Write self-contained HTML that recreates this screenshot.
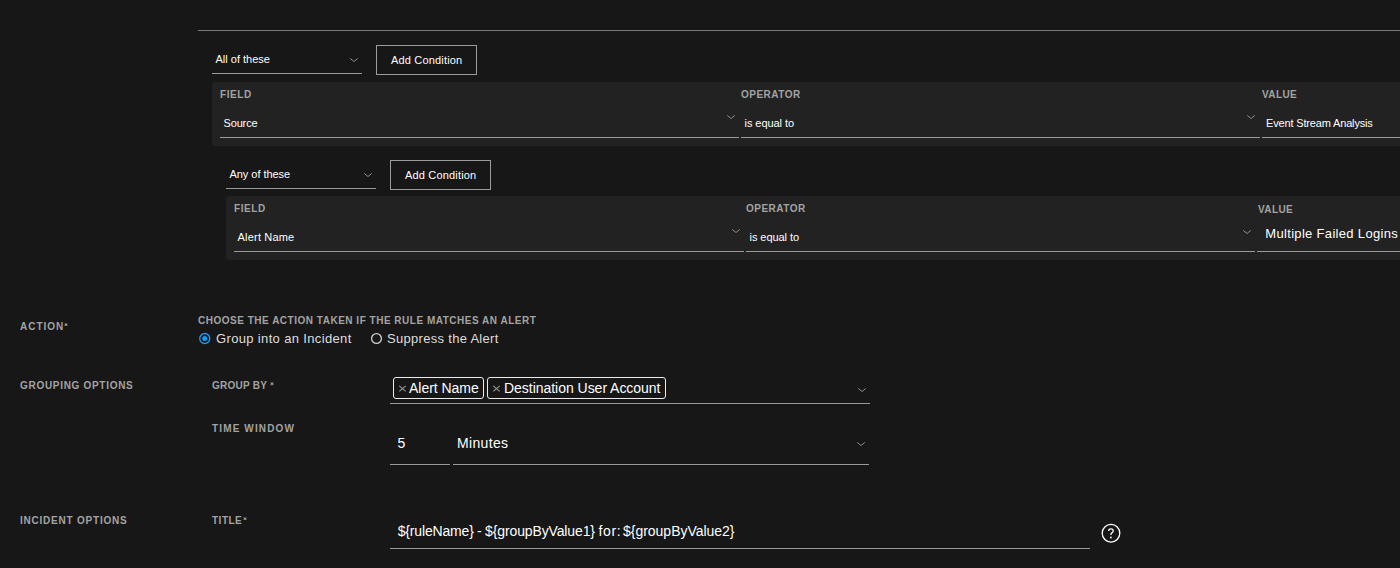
<!DOCTYPE html>
<html><head><meta charset="utf-8"><style>
html,body{margin:0;padding:0;}
body{width:1400px;height:568px;overflow:hidden;background:#171717;position:relative;font-family:"Liberation Sans",sans-serif;}
body>div,body>svg{position:absolute;box-sizing:content-box;}
.t{line-height:1;white-space:nowrap;}
</style></head><body>
<div style="left:212px;top:82px;width:1300px;height:64px;background:#222222;border-radius:4px;"></div>
<div style="left:226px;top:196px;width:1300px;height:64px;background:#222222;border-radius:4px;"></div>
<div style="left:198px;top:30px;width:1202px;height:1px;background:#787878;"></div>
<div style="left:212px;top:73px;width:150px;height:1px;background:#9a9a9a;"></div>
<div style="left:226px;top:188px;width:150px;height:1px;background:#9a9a9a;"></div>
<div style="left:220px;top:137px;width:519px;height:1px;background:#9a9a9a;"></div>
<div style="left:741px;top:137px;width:519px;height:1px;background:#9a9a9a;"></div>
<div style="left:1262px;top:137px;width:200px;height:1px;background:#9a9a9a;"></div>
<div style="left:234px;top:251px;width:510px;height:1px;background:#9a9a9a;"></div>
<div style="left:746px;top:251px;width:509px;height:1px;background:#9a9a9a;"></div>
<div style="left:1257px;top:251px;width:200px;height:1px;background:#9a9a9a;"></div>
<div style="left:390px;top:403px;width:480px;height:1px;background:#9a9a9a;"></div>
<div style="left:390px;top:464px;width:60px;height:1px;background:#9a9a9a;"></div>
<div style="left:453px;top:464px;width:416px;height:1px;background:#9a9a9a;"></div>
<div style="left:390px;top:548px;width:700px;height:1px;background:#9a9a9a;"></div>
<div style="left:376px;top:45px;width:99px;height:28px;border:1px solid #9b9b9b;border-radius:0px;"></div>
<div style="left:390px;top:160px;width:99px;height:28px;border:1px solid #9b9b9b;border-radius:0px;"></div>
<div style="left:393px;top:377px;width:89px;height:20px;border:1px solid #ebebeb;border-radius:3px;"></div>
<div style="left:487px;top:377px;width:177px;height:20px;border:1px solid #ebebeb;border-radius:3px;"></div>
<svg style="left:348.9px;top:57px" width="10" height="7" viewBox="0 0 10 7"><path d="M1.2 1.4 L5 4.5 L8.8 1.4" fill="none" stroke="#8c8c8c" stroke-width="1"/></svg>
<svg style="left:362.9px;top:172px" width="10" height="7" viewBox="0 0 10 7"><path d="M1.2 1.4 L5 4.5 L8.8 1.4" fill="none" stroke="#8c8c8c" stroke-width="1"/></svg>
<svg style="left:725.9px;top:114px" width="10" height="7" viewBox="0 0 10 7"><path d="M1.2 1.4 L5 4.5 L8.8 1.4" fill="none" stroke="#8c8c8c" stroke-width="1"/></svg>
<svg style="left:1246.4px;top:114px" width="10" height="7" viewBox="0 0 10 7"><path d="M1.2 1.4 L5 4.5 L8.8 1.4" fill="none" stroke="#8c8c8c" stroke-width="1"/></svg>
<svg style="left:730.9px;top:228px" width="10" height="7" viewBox="0 0 10 7"><path d="M1.2 1.4 L5 4.5 L8.8 1.4" fill="none" stroke="#8c8c8c" stroke-width="1"/></svg>
<svg style="left:1242.4px;top:228.5px" width="10" height="7" viewBox="0 0 10 7"><path d="M1.2 1.4 L5 4.5 L8.8 1.4" fill="none" stroke="#8c8c8c" stroke-width="1"/></svg>
<svg style="left:856.9px;top:387px" width="10" height="7" viewBox="0 0 10 7"><path d="M1.2 1.4 L5 4.5 L8.8 1.4" fill="none" stroke="#8c8c8c" stroke-width="1"/></svg>
<svg style="left:855.9px;top:441px" width="10" height="7" viewBox="0 0 10 7"><path d="M1.2 1.4 L5 4.5 L8.8 1.4" fill="none" stroke="#8c8c8c" stroke-width="1"/></svg>
<svg style="left:198px;top:332px" width="14" height="14" viewBox="0 0 14 14"><circle cx="6.75" cy="6.5" r="5" fill="none" stroke="#1a9cf2" stroke-width="1.3"/><circle cx="6.75" cy="6.5" r="2.5" fill="#1a9cf2"/></svg>
<svg style="left:370px;top:332px" width="14" height="14" viewBox="0 0 14 14"><circle cx="6.5" cy="6.5" r="4.9" fill="none" stroke="#d0d0d0" stroke-width="1.3"/></svg>
<svg style="left:398.0px;top:384px" width="9" height="9" viewBox="0 0 9 9"><path d="M1.3 1.9 L7.7 7.4 M7.7 1.9 L1.3 7.4" stroke="#959595" stroke-width="1.15"/></svg>
<svg style="left:492.4px;top:384px" width="9" height="9" viewBox="0 0 9 9"><path d="M1.3 1.9 L7.7 7.4 M7.7 1.9 L1.3 7.4" stroke="#959595" stroke-width="1.15"/></svg>
<svg style="left:64.1px;top:322.9px" width="4" height="3.6" viewBox="0 0 4 3.6"><path d="M2 0.2 L2 3.4 M0.5 0.9 L3.5 2.7 M3.5 0.9 L0.5 2.7" stroke="#a3a3a3" stroke-width="0.9"/></svg>
<svg style="left:269.9px;top:382px" width="4" height="3.6" viewBox="0 0 4 3.6"><path d="M2 0.2 L2 3.4 M0.5 0.9 L3.5 2.7 M3.5 0.9 L0.5 2.7" stroke="#a3a3a3" stroke-width="0.9"/></svg>
<svg style="left:242.9px;top:516.9px" width="4" height="3.6" viewBox="0 0 4 3.6"><path d="M2 0.2 L2 3.4 M0.5 0.9 L3.5 2.7 M3.5 0.9 L0.5 2.7" stroke="#a3a3a3" stroke-width="0.9"/></svg>
<svg style="left:1099px;top:522px" width="24" height="24" viewBox="0 0 24 24"><circle cx="12" cy="11.25" r="8.8" fill="none" stroke="#ffffff" stroke-width="1.3"/><path d="M9.6 9.1 C9.6 7.7 10.6 6.9 11.9 6.9 C13.2 6.9 14.2 7.7 14.2 8.9 C14.2 10.2 13 10.6 12.4 11.3 C12 11.7 11.9 12.2 11.9 13.1" fill="none" stroke="#fff" stroke-width="1.3"/><circle cx="11.9" cy="15.5" r="0.9" fill="#fff"/></svg>
<div class="t" style="left:215.50px;top:53.69px;font-size:11px;font-weight:400;letter-spacing:0.0px;color:#ffffff">All of these</div>
<div class="t" style="left:391.00px;top:54.69px;font-size:11px;font-weight:400;letter-spacing:0.17px;color:#ffffff">Add Condition</div>
<div class="t" style="left:220.00px;top:89.53px;font-size:10px;font-weight:700;letter-spacing:0.58px;color:#a3a3a3">FIELD</div>
<div class="t" style="left:741.00px;top:89.53px;font-size:10px;font-weight:700;letter-spacing:0.5px;color:#a3a3a3">OPERATOR</div>
<div class="t" style="left:1262.00px;top:89.53px;font-size:10px;font-weight:700;letter-spacing:0.38px;color:#a3a3a3">VALUE</div>
<div class="t" style="left:223.50px;top:117.69px;font-size:11px;font-weight:400;letter-spacing:-0.15px;color:#ffffff">Source</div>
<div class="t" style="left:744.50px;top:117.69px;font-size:11px;font-weight:400;letter-spacing:-0.05px;color:#ffffff">is equal to</div>
<div class="t" style="left:1266.00px;top:117.69px;font-size:11px;font-weight:400;letter-spacing:-0.16px;color:#ffffff">Event Stream Analysis</div>
<div class="t" style="left:229.50px;top:168.69px;font-size:11px;font-weight:400;letter-spacing:-0.05px;color:#ffffff">Any of these</div>
<div class="t" style="left:405.00px;top:169.69px;font-size:11px;font-weight:400;letter-spacing:0.17px;color:#ffffff">Add Condition</div>
<div class="t" style="left:234.00px;top:203.53px;font-size:10px;font-weight:700;letter-spacing:0.58px;color:#a3a3a3">FIELD</div>
<div class="t" style="left:746.00px;top:203.53px;font-size:10px;font-weight:700;letter-spacing:0.5px;color:#a3a3a3">OPERATOR</div>
<div class="t" style="left:1258.00px;top:204.53px;font-size:10px;font-weight:700;letter-spacing:0.38px;color:#a3a3a3">VALUE</div>
<div class="t" style="left:237.60px;top:231.69px;font-size:11px;font-weight:400;letter-spacing:0.18px;color:#ffffff">Alert Name</div>
<div class="t" style="left:749.50px;top:231.69px;font-size:11px;font-weight:400;letter-spacing:-0.05px;color:#ffffff">is equal to</div>
<div class="t" style="left:1265.30px;top:227.40px;font-size:13px;font-weight:400;letter-spacing:0.32px;color:#ffffff">Multiple Failed Logins</div>
<div class="t" style="left:20.00px;top:321.54px;font-size:10px;font-weight:700;letter-spacing:1.0px;color:#a3a3a3">ACTION</div>
<div class="t" style="left:198.00px;top:315.54px;font-size:10px;font-weight:700;letter-spacing:0.51px;color:#a3a3a3">CHOOSE THE ACTION TAKEN IF THE RULE MATCHES AN ALERT</div>
<div class="t" style="left:216.00px;top:332.00px;font-size:13px;font-weight:400;letter-spacing:0.35px;color:#dedede">Group into an Incident</div>
<div class="t" style="left:387.00px;top:332.00px;font-size:13px;font-weight:400;letter-spacing:0.3px;color:#dedede">Suppress the Alert</div>
<div class="t" style="left:20.00px;top:380.54px;font-size:10px;font-weight:700;letter-spacing:0.7px;color:#a3a3a3">GROUPING OPTIONS</div>
<div class="t" style="left:212.00px;top:380.54px;font-size:10px;font-weight:700;letter-spacing:0.25px;color:#a3a3a3">GROUP BY</div>
<div class="t" style="left:409.00px;top:381.15px;font-size:14px;font-weight:400;letter-spacing:-0.03px;color:#ffffff">Alert Name</div>
<div class="t" style="left:504.00px;top:381.15px;font-size:14px;font-weight:400;letter-spacing:-0.03px;color:#ffffff">Destination User Account</div>
<div class="t" style="left:212.00px;top:423.54px;font-size:10px;font-weight:700;letter-spacing:1.14px;color:#a3a3a3">TIME WINDOW</div>
<div class="t" style="left:397.50px;top:436.15px;font-size:14px;font-weight:400;letter-spacing:0px;color:#ffffff">5</div>
<div class="t" style="left:457.00px;top:436.15px;font-size:14px;font-weight:400;letter-spacing:0.33px;color:#ffffff">Minutes</div>
<div class="t" style="left:20.00px;top:515.53px;font-size:10px;font-weight:700;letter-spacing:0.78px;color:#a3a3a3">INCIDENT OPTIONS</div>
<div class="t" style="left:212.00px;top:515.53px;font-size:10px;font-weight:700;letter-spacing:0.5px;color:#a3a3a3">TITLE</div>
<div class="t" style="left:397.70px;top:523.65px;font-size:14px;font-weight:400;letter-spacing:-0.16px;color:#ffffff">${ruleName}</div>
<div class="t" style="left:477.00px;top:523.65px;font-size:14px;font-weight:400;letter-spacing:0px;color:#ffffff">-</div>
<div class="t" style="left:485.10px;top:523.65px;font-size:14px;font-weight:400;letter-spacing:-0.13px;color:#ffffff">${groupByValue1}</div>
<div class="t" style="left:598.60px;top:523.65px;font-size:14px;font-weight:400;letter-spacing:0.6px;color:#ffffff">for:</div>
<div class="t" style="left:623.00px;top:523.65px;font-size:14px;font-weight:400;letter-spacing:-0.02px;color:#ffffff">${groupByValue2}</div>
</body></html>
